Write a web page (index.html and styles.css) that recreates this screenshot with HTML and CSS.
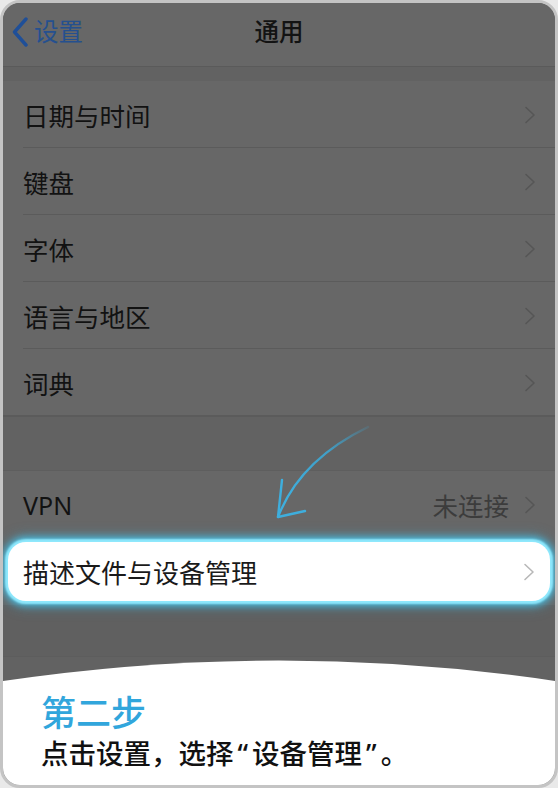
FILE: index.html
```html
<!DOCTYPE html>
<html lang="zh-CN">
<head>
<meta charset="utf-8">
<title>通用</title>
<link rel="stylesheet" href="styles.css">
</head>
<body>
<div class="phone">
  <div class="nav">
    <div class="back">
      <svg class="back-icon" width="18" height="30" viewBox="0 0 18 30"><path d="M15 2 L3.5 15 L15 28" fill="none" stroke="#1f4f98" stroke-width="3.4" stroke-linecap="round" stroke-linejoin="round"/></svg>
      <span>设置</span>
    </div>
    <div class="title">通用</div>
  </div>
  <div class="gap gap-top"></div>
  <div class="group">
    <div class="row"><span class="label">日期与时间</span><svg class="chev" width="12" height="18" viewBox="0 0 12 18"><path d="M2 1.5 L10 9 L2 16.5" fill="none" stroke="currentColor" stroke-width="1.6" stroke-linecap="round" stroke-linejoin="round"/></svg></div>
    <div class="row"><span class="label">键盘</span><svg class="chev" width="12" height="18" viewBox="0 0 12 18"><path d="M2 1.5 L10 9 L2 16.5" fill="none" stroke="currentColor" stroke-width="1.6" stroke-linecap="round" stroke-linejoin="round"/></svg></div>
    <div class="row"><span class="label">字体</span><svg class="chev" width="12" height="18" viewBox="0 0 12 18"><path d="M2 1.5 L10 9 L2 16.5" fill="none" stroke="currentColor" stroke-width="1.6" stroke-linecap="round" stroke-linejoin="round"/></svg></div>
    <div class="row"><span class="label">语言与地区</span><svg class="chev" width="12" height="18" viewBox="0 0 12 18"><path d="M2 1.5 L10 9 L2 16.5" fill="none" stroke="currentColor" stroke-width="1.6" stroke-linecap="round" stroke-linejoin="round"/></svg></div>
    <div class="row last"><span class="label">词典</span><svg class="chev" width="12" height="18" viewBox="0 0 12 18"><path d="M2 1.5 L10 9 L2 16.5" fill="none" stroke="currentColor" stroke-width="1.6" stroke-linecap="round" stroke-linejoin="round"/></svg></div>
  </div>
  <div class="gap gap-mid"></div>
  <div class="row vpn"><span class="label">VPN</span><span class="value">未连接</span><svg class="chev" width="12" height="18" viewBox="0 0 12 18"><path d="M2 1.5 L10 9 L2 16.5" fill="none" stroke="currentColor" stroke-width="1.6" stroke-linecap="round" stroke-linejoin="round"/></svg></div>
  <div class="row highlight"><span class="label">描述文件与设备管理</span><svg class="chev" width="12" height="18" viewBox="0 0 12 18"><path d="M2 1.5 L10 9 L2 16.5" fill="none" stroke="currentColor" stroke-width="1.6" stroke-linecap="round" stroke-linejoin="round"/></svg></div>
  <div class="tail">
    <div class="tail-line"></div>
    <svg class="curve" width="552" height="22" viewBox="0 0 552 22" preserveAspectRatio="none"><path d="M0 22 L0 21 Q276 -20 552 21 L552 22 Z" fill="#ffffff"/></svg>
  </div>
  <div class="panel">
    <div class="step">第二步</div>
    <div class="desc">点击设置，选择<span class="q">“</span>设备管理<span class="q">”</span>。</div>
  </div>
  <svg class="arrow" width="558" height="788" viewBox="0 0 558 788">
    <defs>
      <linearGradient id="fade" x1="368" y1="427" x2="300" y2="500" gradientUnits="userSpaceOnUse">
        <stop offset="0" stop-color="#3aa9d8" stop-opacity="0.15"/>
        <stop offset="0.45" stop-color="#3aa9d8" stop-opacity="0.85"/>
        <stop offset="1" stop-color="#3eaedd" stop-opacity="1"/>
      </linearGradient>
    </defs>
    <path d="M368 427 Q300 460 278 517" fill="none" stroke="url(#fade)" stroke-width="2.4" stroke-linecap="round"/>
    <path d="M282 480 L278 517 L305 511" fill="none" stroke="#3eaedd" stroke-width="2.4" stroke-linecap="round" stroke-linejoin="round"/>
  </svg>
</div>
</body>
</html>
```
FILE: styles.css
```css
* { box-sizing: border-box; }
html, body { margin: 0; padding: 0; }
body {
  width: 558px;
  height: 788px;
  background: #e9e9e9;
  font-family: "Noto Sans CJK SC", "Noto Sans", sans-serif;
}
.phone {
  position: relative;
  width: 558px;
  height: 788px;
  border: 3px solid #c4c4c4;
  border-radius: 20px;
  overflow: hidden;
  background: #666666;
  display: flex;
  flex-direction: column;
}
.nav {
  height: 64px;
  flex: none;
  background: #676767;
  border-bottom: 1px solid #5a5a5a;
  position: relative;
  display: flex;
  align-items: center;
  justify-content: center;
  padding-bottom: 8px;
}
.back {
  position: absolute;
  left: 8px;
  top: 0;
  height: 58px;
  display: flex;
  align-items: center;
  gap: 5px;
  color: #25508f;
  font-size: 24.5px;
}
.back span { margin-top: -3px; }
.back-icon { display: block; }
.title {
  font-size: 24.5px;
  font-weight: 500;
  color: #131313;
}
.gap { flex: none; background: #626262; }
.gap-top { height: 14px; }
.gap-mid { height: 55px; border-top: 1px solid #5b5b5b; border-bottom: 1px solid #5e5e5e; }
.group { flex: none; background: #676767; }
.row {
  height: 67px;
  flex: none;
  display: flex;
  align-items: center;
  padding: 0 19px 0 20px;
  position: relative;
  background: #676767;
}
.group .row::after {
  content: "";
  position: absolute;
  left: 20px;
  right: 0;
  bottom: 0;
  height: 1px;
  background: #5b5b5b;
}
.group .row.last::after { left: 0; }
.label {
  flex: 1;
  font-size: 25.5px;
  color: #121212;
}
.value {
  font-size: 25.5px;
  color: #3c3c3c;
  margin-right: 15px;
}
.chev { display: block; color: #565656; }
.vpn .label { font-family: "Noto Sans", "Noto Sans CJK SC", sans-serif; font-size: 25px; }
.highlight {
  height: 59px;
  margin: 4px 5px;
  padding: 0 15px 0 15px;
  background: #ffffff;
  border-radius: 18px;
  box-shadow: 0 0 2px 3px #8fe8fc, 0 0 7px 5px rgba(70, 205, 245, 0.75), 0 0 14px 6px rgba(60, 180, 225, 0.35);
}
.highlight .label { color: #1a1a1a; font-size: 26px; }
.highlight .chev { color: #b8b8b8; }
.tail {
  flex: 1;
  background: #626262;
  display: flex;
  flex-direction: column;
  justify-content: space-between;
}
.tail-line { height: 52px; border-bottom: 1px solid #5d5d5d; background: #606060; }
.curve { display: block; width: 552px; height: 22px; }
.panel {
  flex: none;
  height: 103px;
  background: #ffffff;
  padding: 9px 0 0 38px;
}
.step {
  font-size: 35px;
  line-height: 40px;
  font-weight: 500;
  color: #31a6dc;
}
.desc {
  margin-top: 4px;
  font-size: 27.5px;
  line-height: 34px;
  font-weight: 500;
  color: #111111;
  white-space: nowrap;
}
.q { font-family: "Noto Sans", sans-serif; padding: 0 4px; }
.arrow {
  position: absolute;
  left: -3px;
  top: -3px;
  pointer-events: none;
}
```
